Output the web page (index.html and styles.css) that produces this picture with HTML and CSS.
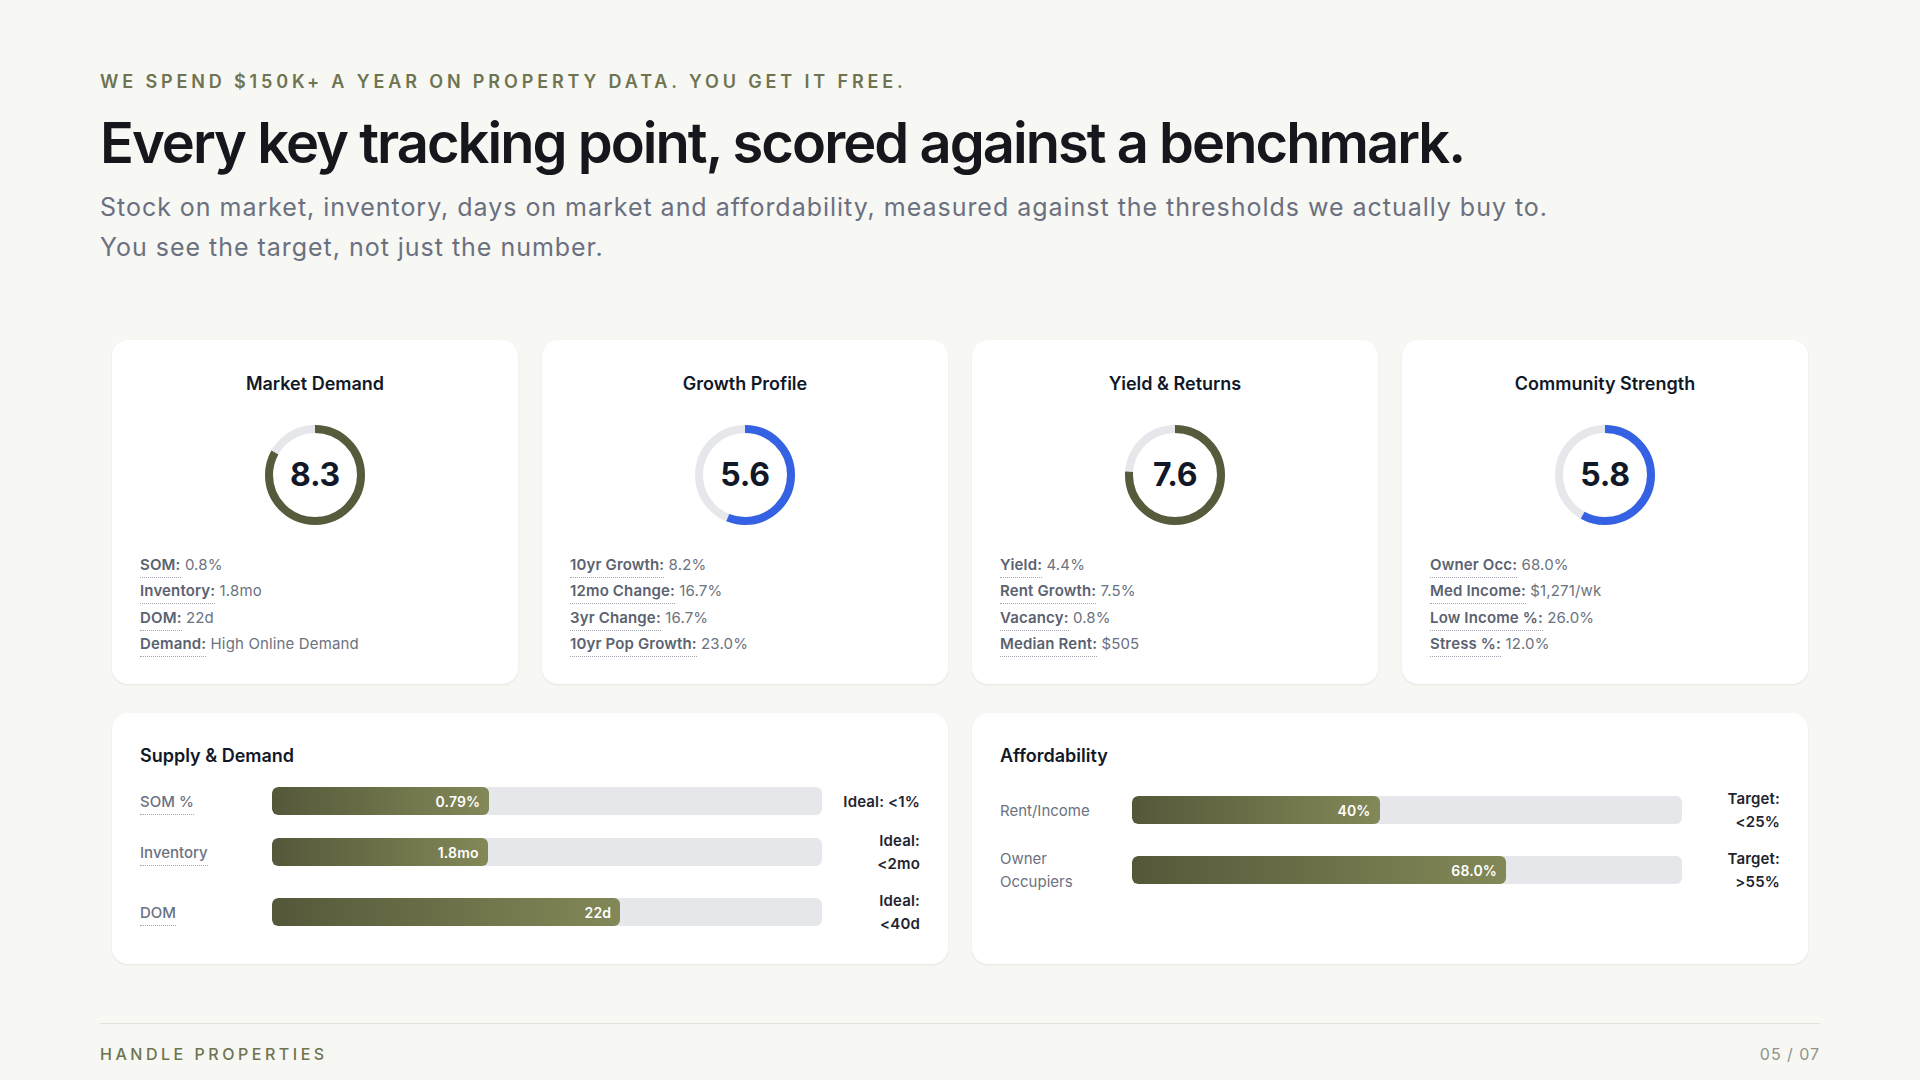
FILE: index.html
```html
<!DOCTYPE html>
<html lang="en">
<head>
<meta charset="utf-8">
<title>Every key tracking point, scored against a benchmark.</title>
<link rel="stylesheet" href="styles.css">
</head>
<body>
<div class="page">
  <header class="intro">
    <p class="eyebrow">We spend $150K+ a year on property data. You get it free.</p>
    <h1 class="headline">Every key tracking point, scored against a benchmark.</h1>
    <p class="lede">Stock on market, inventory, days on market and affordability, measured against the thresholds we actually buy to.<br>You see the target, not just the number.</p>
  </header>

  <section class="score-grid">
    <article class="card score-card">
      <h2 class="card-title">Market Demand</h2>
      <div class="gauge">
        <svg class="ring" viewBox="0 0 100 100" width="100" height="100">
          <circle class="ring-track" cx="50" cy="50" r="46"></circle>
          <circle class="ring-value olive" cx="50" cy="50" r="46" stroke-dasharray="239.9 289.03"></circle>
        </svg>
        <span class="gauge-num">8.3</span>
      </div>
      <div class="stats">
        <div class="stat"><span class="k">SOM:</span> 0.8%</div>
        <div class="stat"><span class="k">Inventory:</span> 1.8mo</div>
        <div class="stat"><span class="k">DOM:</span> 22d</div>
        <div class="stat"><span class="k">Demand:</span> High Online Demand</div>
      </div>
    </article>

    <article class="card score-card">
      <h2 class="card-title">Growth Profile</h2>
      <div class="gauge">
        <svg class="ring" viewBox="0 0 100 100" width="100" height="100">
          <circle class="ring-track" cx="50" cy="50" r="46"></circle>
          <circle class="ring-value blue" cx="50" cy="50" r="46" stroke-dasharray="161.9 289.03"></circle>
        </svg>
        <span class="gauge-num">5.6</span>
      </div>
      <div class="stats">
        <div class="stat"><span class="k">10yr Growth:</span> 8.2%</div>
        <div class="stat"><span class="k">12mo Change:</span> 16.7%</div>
        <div class="stat"><span class="k">3yr Change:</span> 16.7%</div>
        <div class="stat"><span class="k">10yr Pop Growth:</span> 23.0%</div>
      </div>
    </article>

    <article class="card score-card">
      <h2 class="card-title">Yield &amp; Returns</h2>
      <div class="gauge">
        <svg class="ring" viewBox="0 0 100 100" width="100" height="100">
          <circle class="ring-track" cx="50" cy="50" r="46"></circle>
          <circle class="ring-value olive" cx="50" cy="50" r="46" stroke-dasharray="219.7 289.03"></circle>
        </svg>
        <span class="gauge-num">7.6</span>
      </div>
      <div class="stats">
        <div class="stat"><span class="k">Yield:</span> 4.4%</div>
        <div class="stat"><span class="k">Rent Growth:</span> 7.5%</div>
        <div class="stat"><span class="k">Vacancy:</span> 0.8%</div>
        <div class="stat"><span class="k">Median Rent:</span> $505</div>
      </div>
    </article>

    <article class="card score-card">
      <h2 class="card-title">Community Strength</h2>
      <div class="gauge">
        <svg class="ring" viewBox="0 0 100 100" width="100" height="100">
          <circle class="ring-track" cx="50" cy="50" r="46"></circle>
          <circle class="ring-value blue" cx="50" cy="50" r="46" stroke-dasharray="167.6 289.03"></circle>
        </svg>
        <span class="gauge-num">5.8</span>
      </div>
      <div class="stats">
        <div class="stat"><span class="k">Owner Occ:</span> 68.0%</div>
        <div class="stat"><span class="k">Med Income:</span> $1,271/wk</div>
        <div class="stat"><span class="k">Low Income %:</span> 26.0%</div>
        <div class="stat"><span class="k">Stress %:</span> 12.0%</div>
      </div>
    </article>
  </section>

  <section class="bar-grid">
    <article class="card bar-card">
      <h2 class="bar-title">Supply &amp; Demand</h2>
      <div class="rows">
        <div class="bar-row">
          <div class="bar-label"><span class="u">SOM %</span></div>
          <div class="track"><div class="fill" style="width:39.5%"><span>0.79%</span></div></div>
          <div class="target">Ideal: &lt;1%</div>
        </div>
        <div class="bar-row">
          <div class="bar-label"><span class="u">Inventory</span></div>
          <div class="track"><div class="fill" style="width:39.2%"><span>1.8mo</span></div></div>
          <div class="target">Ideal: &lt;2mo</div>
        </div>
        <div class="bar-row">
          <div class="bar-label"><span class="u">DOM</span></div>
          <div class="track"><div class="fill" style="width:63.3%"><span>22d</span></div></div>
          <div class="target">Ideal: &lt;40d</div>
        </div>
      </div>
    </article>

    <article class="card bar-card">
      <h2 class="bar-title">Affordability</h2>
      <div class="rows">
        <div class="bar-row">
          <div class="bar-label plain">Rent/Income</div>
          <div class="track"><div class="fill" style="width:45%"><span>40%</span></div></div>
          <div class="target">Target: &lt;25%</div>
        </div>
        <div class="bar-row">
          <div class="bar-label plain">Owner Occupiers</div>
          <div class="track"><div class="fill" style="width:68%"><span>68.0%</span></div></div>
          <div class="target">Target: &gt;55%</div>
        </div>
      </div>
    </article>
  </section>

  <footer class="foot">
    <span class="brand">Handle Properties</span>
    <span class="pager">05 / 07</span>
  </footer>
</div>
</body>
</html>
```

FILE: styles.css
```css
* { box-sizing: border-box; }

html, body {
  margin: 0;
  padding: 0;
}

body {
  background: #f7f7f3;
  font-family: Inter, "Noto Sans", "Liberation Sans", sans-serif;
  color: #111827;
}

.page {
  width: 1920px;
  height: 1080px;
  padding: 71px 100px 0;
  display: flex;
  flex-direction: column;
}

.intro p, .intro h1, .card h2 { margin: 0; }

.eyebrow {
  font-size: 18px;
  line-height: 22px;
  font-weight: 600;
  letter-spacing: 0.215em;
  text-transform: uppercase;
  color: #6e7451;
}

.headline {
  margin-top: 18px !important;
  font-size: 56px;
  line-height: 64px;
  font-weight: 600;
  letter-spacing: -0.035em;
  color: #15171c;
}

.lede {
  margin-top: 12px !important;
  font-size: 25px;
  line-height: 40px;
  font-weight: 400;
  letter-spacing: 0.039em;
  color: #6b7080;
}

/* score cards */
.score-grid {
  margin-top: 73px;
  padding: 0 12px;
  display: grid;
  grid-template-columns: repeat(4, 1fr);
  gap: 24px;
}

.card {
  background: #ffffff;
  border-radius: 16px;
  box-shadow: 0 1px 3px rgba(20, 24, 10, 0.05), 0 1px 2px rgba(20, 24, 10, 0.03);
}

.score-card {
  padding: 31px 28px 27px;
  display: flex;
  flex-direction: column;
}

.card-title {
  font-size: 18px;
  line-height: 25px;
  font-weight: 600;
  text-align: center;
  color: #111827;
}

.gauge {
  margin: 29px auto 0;
  width: 100px;
  height: 100px;
  display: grid;
  place-items: center;
}

.ring, .gauge-num { grid-area: 1 / 1; }

.ring {
  transform: rotate(-90deg);
}

.ring-track {
  fill: none;
  stroke: #e6e7eb;
  stroke-width: 8;
}

.ring-value {
  fill: none;
  stroke-width: 8;
}

.ring-value.olive { stroke: #575b3c; }
.ring-value.blue { stroke: #3462e2; }

.gauge-num {
  font-size: 32px;
  line-height: 1;
  font-weight: 700;
  color: #111827;
  letter-spacing: -0.01em;
}

.stats {
  margin-top: 27px;
}

.stat {
  font-size: 15px;
  line-height: 26.25px;
  letter-spacing: 0.01em;
  color: #6b7280;
}

.stat .k {
  font-weight: 600;
  color: #5b6270;
  border-bottom: 1px dotted #a3a8b3;
  padding-bottom: 3px;
}

/* bar cards */
.bar-grid {
  margin-top: 29px;
  padding: 0 12px;
  display: grid;
  grid-template-columns: 1fr 1fr;
  gap: 24px;
}

.bar-card {
  padding: 30px 28px 29px;
}

.bar-title {
  font-size: 18px;
  line-height: 25px;
  font-weight: 600;
  color: #111827;
}

.rows {
  margin-top: 19px;
  display: flex;
  flex-direction: column;
  gap: 14px;
}

.bar-row {
  display: grid;
  grid-template-columns: 132px 1fr 98px;
  align-items: center;
}

.bar-label {
  max-width: 100px;
  font-size: 15px;
  line-height: 23px;
  color: #6b7280;
}

.bar-label .u {
  font-weight: 500;
  border-bottom: 1px dotted #a3a8b3;
  padding-bottom: 3px;
}

.track {
  height: 28px;
  border-radius: 6px;
  background: #e6e7eb;
  overflow: hidden;
}

.fill {
  height: 100%;
  border-radius: 6px;
  background: linear-gradient(90deg, #545839 0%, #838858 100%);
  display: flex;
  align-items: center;
  justify-content: flex-end;
  padding-right: 9px;
}

.fill span {
  font-size: 14px;
  font-weight: 600;
  color: #ffffff;
  letter-spacing: 0.01em;
}

.target {
  padding-left: 17px;
  font-size: 15px;
  line-height: 23px;
  font-weight: 600;
  text-align: right;
  letter-spacing: 0.01em;
  color: #1f2430;
}

/* footer */
.foot {
  margin-top: 59px;
  border-top: 1px solid #e3e3dd;
  padding-top: 20px;
  display: flex;
  justify-content: space-between;
  align-items: baseline;
  font-size: 16px;
  line-height: 20px;
}

.brand {
  text-transform: uppercase;
  letter-spacing: 0.22em;
  font-weight: 500;
  color: #6e7451;
}

.pager {
  color: #92928c;
  letter-spacing: 0.06em;
}
```
